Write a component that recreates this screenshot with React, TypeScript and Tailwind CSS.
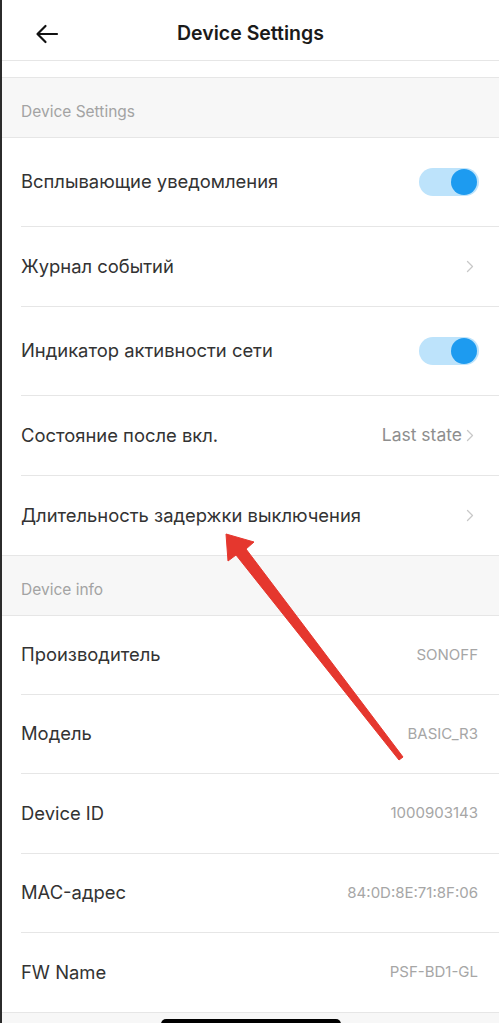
import React from "react";

const font = { fontFamily: "Inter, 'Noto Sans', sans-serif" };

function Toggle() {
  return (
    <div className="relative h-[28px] w-[60px] rounded-full bg-[#bde3fb]">
      <div className="absolute right-[2px] top-[1px] h-[26px] w-[26px] rounded-full bg-[#1d9bf0]" />
    </div>
  );
}

function Chevron() {
  return (
    <svg width="8" height="13" viewBox="0 0 8 13" fill="none">
      <path d="M1.5 1.5L6.5 6.5L1.5 11.5" stroke="#c8c8c8" strokeWidth="1.3" strokeLinecap="round" strokeLinejoin="round" />
    </svg>
  );
}

function Row({
  label,
  height,
  right,
  last,
}: {
  label: string;
  height: string;
  right: React.ReactNode;
  last?: boolean;
}) {
  return (
    <div className={`flex items-center pl-[19px] ${height}`}>
      <div className={`flex h-full flex-1 items-center pr-[20px] ${last ? "" : "border-b border-[#e6e6e6]"}`}>
        <span className="flex-1 text-[18.4px] text-[#333333]">{label}</span>
        {right}
      </div>
    </div>
  );
}

function Section({ title }: { title: string }) {
  return (
    <div className="flex h-[61px] items-center border-y border-[#e6e6e6] bg-[#f7f7f7] pl-[19px] pt-[8px] text-[15.5px] text-[#a3a3a3]">
      {title}
    </div>
  );
}

function Value({ text }: { text: string }) {
  return <span className="pr-[1px] text-[15px] text-[#a6a6a6]">{text}</span>;
}

export default function App() {
  return (
    <div className="relative h-[1023px] w-[499px] overflow-hidden border-l-2 border-[#2b2b2b] bg-white" style={font}>
      {/* header */}
      <div className="relative flex h-[61px] items-center justify-center border-b border-[#e6e6e6]">
        <svg className="absolute left-[33px] top-[24px]" width="24" height="20" viewBox="0 0 24 20" fill="none">
          <path d="M22 10H3M10.5 2L2.5 10L10.5 18" stroke="#111" strokeWidth="2.2" strokeLinecap="round" strokeLinejoin="round" />
        </svg>
        <span className="pt-[8px] text-[19.5px] font-semibold text-[#1a1a1a]">Device Settings</span>
      </div>
      <div className="h-[16px]" />
      <Section title="Device Settings" />

      <Row label="Всплывающие уведомления" height="h-[89px]" right={<Toggle />} />
      <Row label="Журнал событий" height="h-[80px]" right={<span className="mr-[5px]"><Chevron /></span>} />
      <Row label="Индикатор активности сети" height="h-[89px]" right={<Toggle />} />
      <Row
        label="Состояние после вкл."
        height="h-[80px]"
        right={
          <span className="mr-[5px] flex items-center gap-[4px]">
            <span className="text-[17.5px] text-[#8e8e8e]">Last state</span>
            <Chevron />
          </span>
        }
      />
      <Row label="Длительность задержки выключения" height="h-[79px]" last right={<span className="mr-[5px]"><Chevron /></span>} />
      <Section title="Device info" />

      <Row label="Производитель" height="h-[79px]" right={<Value text="SONOFF" />} />
      <Row label="Модель" height="h-[79px]" right={<Value text="BASIC_R3" />} />
      <Row label="Device ID" height="h-[80px]" right={<Value text="1000903143" />} />
      <Row label="MAC-адрес" height="h-[79px]" right={<Value text="84:0D:8E:71:8F:06" />} />
      <Row label="FW Name" height="h-[79px]" last right={<Value text="PSF-BD1-GL" />} />

      {/* bottom bar */}
      <div className="relative h-[20px] border-t border-[#e6e6e6] bg-[#f7f7f7]">
        <div className="absolute left-[159px] top-[6px] h-[10px] w-[180px] rounded-t-[5px] bg-black" />
      </div>

      {/* red annotation arrow */}
      <svg className="pointer-events-none absolute left-0 top-0" width="499" height="1023" viewBox="0 0 499 1023">
        <path d="M224 534 L252 542 L244 549 L401 757 L397 760 L234 555 L226 561 Z" fill="#e5372e" stroke="#e5372e" strokeWidth="1" strokeLinejoin="round" />
      </svg>
    </div>
  );
}
